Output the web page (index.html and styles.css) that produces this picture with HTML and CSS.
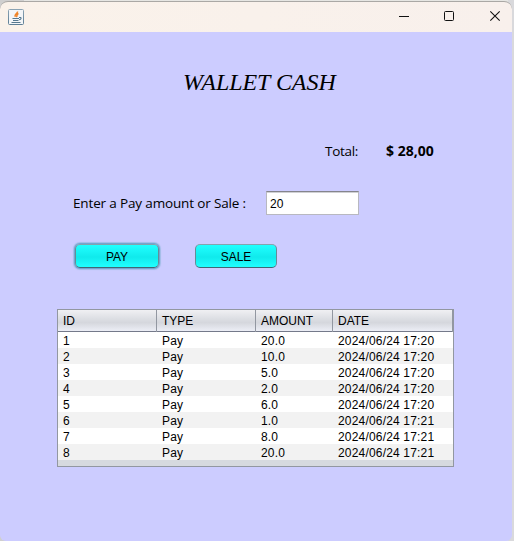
FILE: index.html
```html
<!DOCTYPE html>
<html lang="en">
<head>
<meta charset="utf-8">
<title>Wallet Cash</title>
<link rel="stylesheet" href="styles.css">
</head>
<body>
<main class="window">
  <header class="titlebar">
    <svg class="app-icon" width="16" height="16" viewBox="0 0 16 16">
      <defs><linearGradient id="g" x2="0" y2="1"><stop stop-color="#8ba3b3"/><stop offset="1" stop-color="#5d7e95"/></linearGradient></defs>
      <rect x=".5" y=".5" width="15" height="15" rx="1" fill="#f3f5f7" stroke="url(#g)"/>
      <path d="M9.500 2.500C10 4.500 6 5 7.200 7.800M10.500 4.500C8 5.500 9.700 6.500 8.300 8" fill="none" stroke="#f08428" stroke-width="1.500"/>
      <path d="M4.500 9.500h6.500M5 11.500h5.500M3.500 13.500h9M11 8.500c3-.5 2.500 2 0 2.300" fill="none" stroke="#56788f" stroke-width="1.100"/>
    </svg>
    <svg class="controls" width="104" height="12" viewBox="0 0 104 12" fill="none" stroke="#111">
      <path d="M0 6.500h10"/>
      <rect x="45.500" y="1.500" width="9" height="9" rx="1"/>
      <path d="M91.300 1.300l9.400 9.400M100.700 1.300l-9.400 9.400" stroke-width="1.100"/>
    </svg>
  </header>
  <section class="content">
    <h1 class="title">WALLET CASH</h1>
    <div class="total"><span class="total-label">Total:</span><strong class="total-value">$ 28,00</strong></div>
    <div class="entry"><label class="entry-label" for="amount">Enter a Pay amount or Sale :</label><input class="field" id="amount" value="20"></div>
    <div class="buttons"><button class="button focused">PAY</button><button class="button">SALE</button></div>
    <div class="table">
      <div class="row head"><span>ID</span><span>TYPE</span><span>AMOUNT</span><span>DATE</span></div>
      <div class="row"><span>1</span><span>Pay</span><span>20.0</span><span>2024/06/24 17:20</span></div>
      <div class="row"><span>2</span><span>Pay</span><span>10.0</span><span>2024/06/24 17:20</span></div>
      <div class="row"><span>3</span><span>Pay</span><span>5.0</span><span>2024/06/24 17:20</span></div>
      <div class="row"><span>4</span><span>Pay</span><span>2.0</span><span>2024/06/24 17:20</span></div>
      <div class="row"><span>5</span><span>Pay</span><span>6.0</span><span>2024/06/24 17:20</span></div>
      <div class="row"><span>6</span><span>Pay</span><span>1.0</span><span>2024/06/24 17:21</span></div>
      <div class="row"><span>7</span><span>Pay</span><span>8.0</span><span>2024/06/24 17:21</span></div>
      <div class="row"><span>8</span><span>Pay</span><span>20.0</span><span>2024/06/24 17:21</span></div>
    </div>
  </section>
</main>
</body>
</html>
```
FILE: styles.css
```css
* { box-sizing: border-box; }
body {
  margin: 0;
  height: 541px;
  overflow: hidden;
  background: linear-gradient(90deg, #cfcfcf 24px, #e6e6e3 24px 508px, #d9d9dc 508px);
  font: 12px/16px "Liberation Sans", Arial, sans-serif;
  color: #000;
}
.window {
  width: 512px;
  height: 541px;
  padding-top: 1px;
  border-radius: 8px 8px 6px 6px;
  overflow: hidden;
}
.titlebar {
  display: flex;
  justify-content: space-between;
  height: 31px;
  padding: 7px 9px 0 8px;
  border-top: 1px solid #aaa8a5;
  border-radius: 8px 8px 0 0;
  background: linear-gradient(90deg, #faf2ea, #f8f0ec);
}
.app-icon { display: block; }
.controls { display: block; margin-top: 1px; }
.content {
  height: 509px;
  background: #ccccff;
  overflow: hidden;
}
.title {
  margin: 36px 0 0 183px;
  font: italic 24px/28px "Liberation Serif", "Times New Roman", serif;
  letter-spacing: -0.05px;
  white-space: nowrap;
}
.total {
  display: flex;
  margin: 45px 0 0 325px;
  font: 14px/20px "Open Sans", sans-serif;
}
.total-label { width: 61px; font-size: 13.5px; letter-spacing: -0.3px; }
.entry {
  display: flex;
  margin: 30px 0 0 73px;
}
.entry-label {
  width: 193px;
  font: 13.5px/24px "Open Sans", sans-serif;
  letter-spacing: -0.15px;
  white-space: nowrap;
}
.field {
  width: 93px;
  height: 24px;
  padding: 1px 3px 0;
  border: 1px solid #b8b8c0;
  border-top: 1px solid #85858c;
  box-shadow: inset 0 1px #d0d0d4;
  background: #fff;
  font: inherit;
  letter-spacing: 0.15px;
  outline: 0;
}
.buttons {
  display: flex;
  gap: 36px;
  margin: 29px 0 0 75px;
}
.button {
  width: 82px;
  height: 24px;
  padding: 1px 0 0;
  border: 1px solid #648e98;
  border-color: #84a3ae #668c96 #3e6874;
  border-radius: 5px;
  background: linear-gradient(#20ffff, #10eaec 55%, #20ffff);
  color: #000;
  font: inherit;
}
.focused {
  width: 84px;
  box-shadow: 0 0 0 1px #73a4d1, 0 0 1px 2px #a2bde6;
}
.table {
  width: 397px;
  height: 158px;
  margin: 41px 0 0 57px;
  border: 1px solid #9297a1;
  background: #d6d9df;
}
.row {
  display: grid;
  grid-template-columns: 99px 99px 77px 120px;
  height: 16px;
  background: #fff;
}
.row:nth-child(odd) { background: #f2f2f2; }
.row span {
  padding-left: 5px;
  line-height: 18px;
  letter-spacing: 0.18px;
  white-space: nowrap;
}
.row.head {
  height: 22px;
  border-bottom: 1px solid #74798a;
  background: linear-gradient(#f0f0f3 0, #dddfe4 40%, #d5d7dd 60%, #eceef6 100%);
}
.row.head span {
  border-right: 1px solid #9297a1;
  line-height: 22px;
  letter-spacing: 0;
}
```
